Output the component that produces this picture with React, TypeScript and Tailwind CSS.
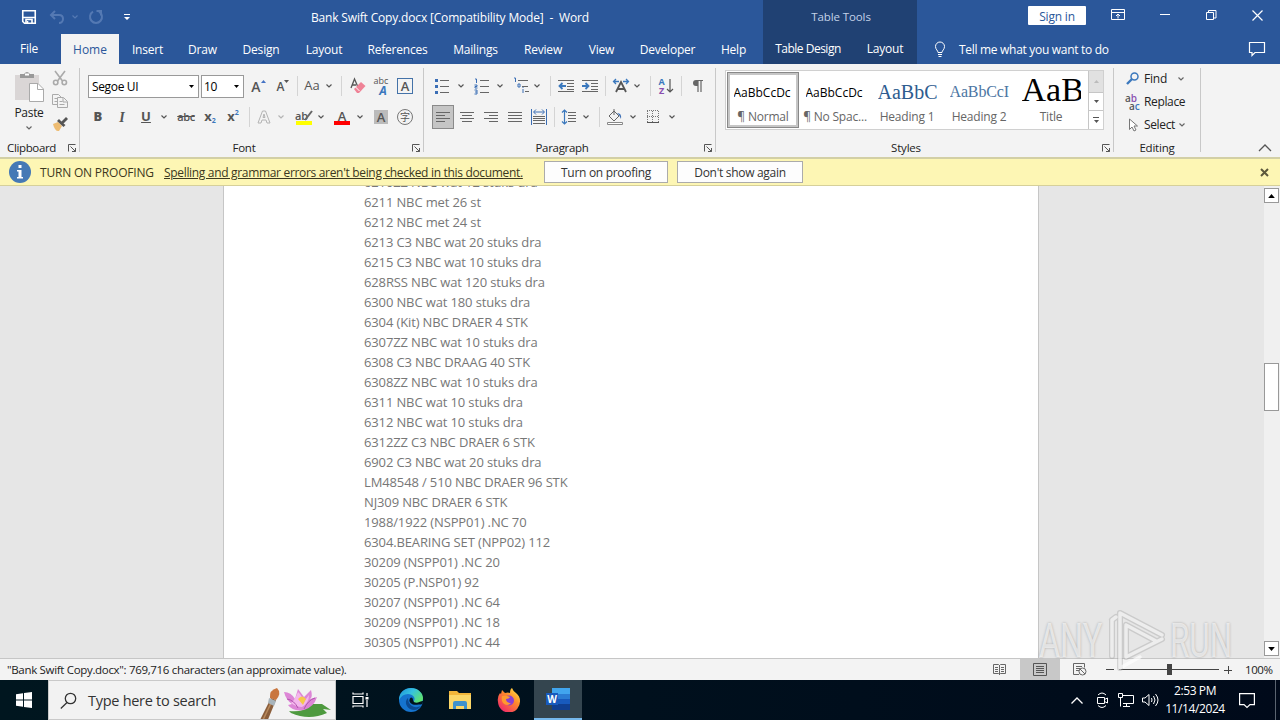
import React from 'react';
import clsx from 'clsx';

const documentLines = [
  '6210ZZ NBC wat 12 stuks dra',
  '6211 NBC met 26 st',
  '6212 NBC met 24 st',
  '6213 C3 NBC wat 20 stuks dra',
  '6215 C3 NBC wat 10 stuks dra',
  '628RSS NBC wat 120 stuks dra',
  '6300 NBC wat 180 stuks dra',
  '6304 (Kit) NBC DRAER 4 STK',
  '6307ZZ NBC wat 10 stuks dra',
  '6308 C3 NBC DRAAG 40 STK',
  '6308ZZ NBC wat 10 stuks dra',
  '6311 NBC wat 10 stuks dra',
  '6312 NBC wat 10 stuks dra',
  '6312ZZ C3 NBC DRAER 6 STK',
  '6902 C3 NBC wat 20 stuks dra',
  'LM48548 / 510 NBC DRAER 96 STK',
  'NJ309 NBC DRAER 6 STK',
  '1988/1922 (NSPP01) .NC 70',
  '6304.BEARING SET (NPP02) 112',
  '30209 (NSPP01) .NC 20',
  '30205 (P.NSP01) 92',
  '30207 (NSPP01) .NC 64',
  '30209 (NSPP01) .NC 18',
  '30305 (NSPP01) .NC 44',
];

const tabs = [
  { name: 'Insert', width: 'w-[57px]' },
  { name: 'Draw', width: 'w-[53px]' },
  { name: 'Design', width: 'w-[64px]' },
  { name: 'Layout', width: 'w-[62px]' },
  { name: 'References', width: 'w-[85px]' },
  { name: 'Mailings', width: 'w-[71px]' },
  { name: 'Review', width: 'w-[64px]' },
  { name: 'View', width: 'w-[53px]' },
  { name: 'Developer', width: 'w-[79px]' },
  { name: 'Help', width: 'w-[53px]' },
];

type CellProps = { className?: string; children?: React.ReactNode };

const Cell = ({ className, children }: CellProps) => (
  <div className={clsx('flex h-6 shrink-0 items-center justify-center', className)}>{children}</div>
);

const Sep = ({ className }: CellProps) => <div className={clsx('h-5 w-px shrink-0 bg-[#d4d4d4]', className)} />;

const Chevron = ({ className }: CellProps) => (
  <svg className={clsx('h-1 w-1.5 shrink-0', className)} viewBox="0 0 6 4" fill="none" stroke="currentColor" strokeWidth="1.2">
    <path d="M.5.5 3 3 5.5.5" />
  </svg>
);

const Triangle = ({ className }: CellProps) => (
  <svg className={clsx('shrink-0', className ?? 'h-[3px] w-[5px]')} viewBox="0 0 5 3" fill="currentColor">
    <path d="M0 0h5L2.5 3z" />
  </svg>
);

const Launcher = ({ className }: CellProps) => (
  <svg className={clsx('h-2 w-2 shrink-0', className)} viewBox="0 0 8 8" fill="none" stroke="#555">
    <path d="M.5 7.500V.5H7.500M2.500 2.500l5 5M7.500 4v3.500H4" />
  </svg>
);

// Horizontal rules used by all list and alignment icons
const Lines = ({ rows }: { rows: [number, number, number][] }) => (
  <>
    {rows.map(([x1, x2, y], i) => (
      <path key={i} d={`M${x1} ${y}.5H${x2}`} stroke="#666" />
    ))}
  </>
);

const Svg = ({ children, className }: CellProps) => (
  <svg className={clsx('h-5 w-5 shrink-0', className)} viewBox="0 0 20 20" fill="none">
    {children}
  </svg>
);

const TitleBar = () => (
  <header className="flex h-16 bg-[#2b579a] text-white">
    <div className="flex w-[763px] flex-col">
      <div className="flex h-[34px] items-center pl-[21px]">
        <svg className="h-4 w-4" viewBox="0 0 16 16" fill="none" stroke="#fff" strokeWidth="1.600">
          <path d="M1.750 1.750h12.500v12.500H3.500L1.750 12.500z" />
          <path d="M2 8.500h12M5 14v-3.500h6V14" />
          <path d="M6.500 12v2" />
        </svg>
        <svg className="ml-3 h-4 w-4 text-[#5479b3]" viewBox="0 0 16 16" fill="none" stroke="currentColor" strokeWidth="2">
          <path d="M6 2 2 6l4 4M2.500 6H10c3 0 4 2 4 4s-1.500 4-4 4" />
        </svg>
        <Chevron className="ml-[7px] text-[#5479b3]" />
        <svg className="ml-[10px] h-4 w-4 text-[#5479b3]" viewBox="0 0 16 16" fill="none" stroke="currentColor" strokeWidth="2">
          <path d="M5 2.700A6 6 0 1 0 11 2.700M8.500 2H13v4.500" />
        </svg>
        <svg className="ml-[19px] h-2 w-2" viewBox="0 0 8 8" fill="#fff">
          <path d="M1 1h6v1H1zM1 4h6L4 7z" />
        </svg>
        <div className="ml-[180px] pt-0.5 text-[12px] tracking-[-0.17px] whitespace-pre">Bank Swift Copy.docx [Compatibility Mode]  -  Word</div>
      </div>
      <nav className="flex h-[30px] text-[12px] leading-[32px] tracking-[-0.2px]">
        <div className="w-[58px] text-center leading-[30px]">File</div>
        <div className="ml-[3px] w-[58px] bg-[#f3f3f3] text-center tracking-normal text-[#2b579a]">Home</div>
        {tabs.map((tab) => (
          <div key={tab.name} className={clsx('text-center', tab.width)}>
            {tab.name}
          </div>
        ))}
      </nav>
    </div>
    <div className="flex w-[154px] flex-col bg-[#204173] text-[12px]">
      <div className="h-[34px] pl-0.5 text-center text-[11.500px] leading-[33px] tracking-[-0.1px] text-[#c3d2e8]">Table Tools</div>
      <div className="flex leading-[32px]">
        <div className="w-[90px] text-center tracking-[-0.5px]">Table Design</div>
        <div className="w-[64px] text-center tracking-[-0.2px]">Layout</div>
      </div>
    </div>
    <div className="flex w-[363px] flex-col text-[12px]">
      <div className="flex h-[34px] items-start">
        <div className="mt-1.5 ml-[111px] h-[19px] w-[58px] rounded-[1px] bg-white text-center leading-[22px] tracking-[-0.2px] text-[#2b579a]">Sign in</div>
        <svg className="mt-[7px] ml-6 h-4 w-4" viewBox="0 0 16 16" fill="none" stroke="#fff">
          <path d="M1.500 2.500h13v10h-13zM1.500 5.500h13M8 11.500v-4M6 9l2-2 2 2" />
        </svg>
        <div className="mt-[14px] ml-[34px] h-px w-[10px] bg-white" />
        <svg className="mt-[10px] ml-9 h-[11px] w-[11px]" viewBox="0 0 11 11" fill="none" stroke="#fff">
          <path d="M.5 2.500h7v7h-7zM2.500 2.500v-2h7.500v7.500H8" />
        </svg>
        <svg className="mt-[10px] ml-[35px] h-[11px] w-[11px]" viewBox="0 0 11 11" fill="none" stroke="#fff" strokeWidth="1.200">
          <path d="m.5.5 10 10M10.500.5l-10 10" />
        </svg>
      </div>
      <div className="flex h-[30px] items-center">
        <svg className="ml-4 h-4 w-3.5" viewBox="0 0 12 16" fill="none" stroke="#fff">
          <path d="M4 11.500c0-2-2.500-3-2.500-6a4.500 4.500 0 0 1 9 0c0 3-2.500 4-2.500 6zM4 13.500h4M4.500 15.500h3" />
        </svg>
        <div className="ml-3 w-[150px] pt-px tracking-[-0.3px] whitespace-nowrap">Tell me what you want to do</div>
        <svg className="ml-[139px] h-4 w-[18px]" viewBox="0 0 18 16" fill="none" stroke="#fff" strokeWidth="1.200">
          <path d="M1.500 1.500h15v10H7l-3 3v-3H1.500z" />
        </svg>
      </div>
    </div>
  </header>
);

const ClipboardGroup = () => (
  <section className="flex h-[84px] w-[80px] flex-col border-r border-[#c8c8c8]">
    <div className="flex h-[72px] shrink-0">
      <div className="flex w-[48px] flex-col items-center pl-[10px]">
        <svg className="mt-[3px] h-8 w-8 shrink-0" viewBox="0 0 32 32">
          <path d="M2 4h24v25H2z" fill="#dad6d6" />
          <path d="M7 3h4q3-4 6 0h4v4H7z" fill="#999" />
          <path d="M12 2.500h4v2h-4z" fill="#fff" />
          <path d="M16.500 12.500H25l5.500 5.500v12.500h-14z" fill="#fff" stroke="#aaa" />
          <path d="M24.500 12.500v6h6" fill="none" stroke="#aaa" />
        </svg>
        <div className="text-[12px] leading-[20px] tracking-[-0.3px]">Paste</div>
        <Chevron className="mt-[3px] text-[#666]" />
      </div>
      <div className="flex w-7 flex-col items-center pr-1">
        <svg className="mt-[2px] h-4 w-4 shrink-0" viewBox="0 0 16 16" fill="none" stroke="#aaa" strokeWidth="1.600">
          <path d="M3 1l7.500 10M13 1 5.500 11" />
          <circle cx="3.700" cy="12.500" r="2.200" />
          <circle cx="12.300" cy="12.500" r="2.200" />
        </svg>
        <svg className="mt-[7px] h-4 w-4 shrink-0" viewBox="0 0 16 16" fill="#f3f3f3" stroke="#aaa">
          <path d="M.5 1.500h6l3 3v7h-9zM2.500 5.500h4M2.500 8.500h4" />
          <path d="M5.500 4.500h6l4 4v6h-10zM11 5v4h4M7.500 8.500h3M7.500 11.500h5" />
        </svg>
        <svg className="mt-[7px] h-4 w-4 shrink-0" viewBox="0 0 16 16">
          <path d="m1 8 5-2 4 4-3 5q-4 1-6-7z" fill="#eebc72" />
          <path d="m5 5 2-2 2.500 2.500L14 1l2 2-4.500 4.500L13.500 9l-2 2z" fill="#555" />
        </svg>
      </div>
    </div>
    <div className="flex h-4 shrink-0 items-center pl-[7px] text-[11.500px]">
      <div className="w-[61px] tracking-[-0.35px]">Clipboard</div>
      <Launcher />
    </div>
  </section>
);

const FontGroup = () => (
  <section className="flex h-[84px] w-[344px] flex-col border-r border-[#c8c8c8] text-[#555]">
    <div className="mt-[6px] flex h-6 shrink-0 items-center pl-2">
      <div className="flex h-[23px] w-[111px] items-center justify-between border border-[#999] bg-white pt-px pr-1 pl-[3px] text-[12px] tracking-[-0.35px] text-black">
        Segoe UI
        <Triangle />
      </div>
      <div className="ml-[2px] flex h-[23px] w-[43px] items-center justify-between border border-[#999] bg-white pt-px pr-1 pl-[2px] text-[12px] tracking-[-0.35px] text-black">
        10
        <Triangle />
      </div>
      <Cell className="w-[29px]">
        <span className="text-[14px] font-semibold">A</span>
        <svg className="mb-2.5 h-[3px] w-[5px]" viewBox="0 0 5 3" fill="#4472c4"><path d="M0 3h5L2.500 0z" /></svg>
      </Cell>
      <Cell className="w-[20px]">
        <span className="pt-0.5 text-[12px] font-semibold">A</span>
        <Triangle className="mb-2.5 h-[3px] w-[5px]" />
      </Cell>
      <Sep className="ml-1" />
      <Cell className="w-7 text-[13px] font-medium">Aa</Cell>
      <Chevron />
      <Sep className="ml-[9px]" />
      <Cell className="w-8">
        <Svg>
          <path d="M3 12 6.500 3l3 7M4 9h4" stroke="#555" strokeWidth="1.300" />
          <path d="m6 13 7-7 4.500 4-6.500 7H9z" fill="#ef8296" />
          <path d="m7.500 11 4 4" stroke="#fff" />
        </Svg>
      </Cell>
      <Cell className="w-[14px] flex-col">
        <span className="h-[7px] text-[9px] leading-[6px] font-medium">abc</span>
        <span className="h-[10px] pl-1 text-[12px] leading-[11px] font-bold text-[#3b78bd] italic">A</span>
      </Cell>
      <Cell className="w-[34px]">
        <div className="h-4 w-4 border border-[#4472a8] text-center text-[13px] leading-[14px] font-semibold">A</div>
      </Cell>
    </div>
    <div className="mt-[7px] flex h-6 shrink-0 items-center pl-[6px]">
      <Cell className="w-6 text-[13px] font-extrabold">B</Cell>
      <Cell className="w-6 font-['Liberation_Serif'] text-[14px] font-bold italic">I</Cell>
      <Cell className="w-6 text-[13px] font-bold underline">U</Cell>
      <Cell className="w-3"><Chevron /></Cell>
      <Cell className="w-8 text-[11px] font-semibold tracking-[-0.4px] line-through">abc</Cell>
      <Cell className="w-4 text-[13px] font-bold">x<span className="pt-2 text-[7px] text-[#3b78bd]">2</span></Cell>
      <Cell className="w-[30px] text-[13px] font-bold">x<span className="pb-2 text-[7px] text-[#3b78bd]">2</span></Cell>
      <Sep className="ml-px" />
      <Cell className="w-7">
        <Svg>
          <path d="M4 16 8.500 4h3L16 16h-3l-1-3H8l-1 3zM9 10.500h2L10 7z" stroke="#b4b4b4" />
        </Svg>
      </Cell>
      <Chevron className="text-[#b4b4b4]" />
      <Cell className="ml-1.5 w-7 flex-col">
        <div className="flex h-[11px] items-end text-[11px] leading-[10px] font-semibold">
          ab
          <svg className="-ml-1 h-[11px] w-[9px]" viewBox="0 0 9 11" fill="none" stroke="#666" strokeWidth="2"><path d="M8 1 1 10" /></svg>
        </div>
        <div className="h-1 w-4 bg-[#ffff00]" />
      </Cell>
      <Chevron />
      <Cell className="ml-[3px] w-[30px] flex-col">
        <span className="h-[11px] text-[13px] leading-[12px] font-semibold">A</span>
        <div className="h-1 w-4 bg-[#f00]" />
      </Cell>
      <Chevron />
      <Cell className="ml-[11px] w-[14px]">
        <div className="h-[14px] w-[14px] bg-[#bbb] text-center text-[13px] leading-[14px] font-semibold">A</div>
      </Cell>
      <Cell className="w-[34px]">
        <div className="h-4 w-4 rounded-full border border-[#777] text-center font-['Noto_Sans_CJK_SC',sans-serif] text-[10px] leading-[14px]">字</div>
      </Cell>
    </div>
    <div className="mt-[11px] flex h-4 shrink-0 items-center text-[11.500px] tracking-[-0.2px] text-[#222]">
      <div className="w-[332px] pr-1 text-center">Font</div>
      <Launcher />
    </div>
  </section>
);

const ParagraphGroup = () => (
  <section className="flex h-[84px] w-[292px] flex-col border-r border-[#c8c8c8] text-[#555]">
    <div className="mt-[6px] flex h-6 shrink-0 items-center pl-2">
      <Svg>
        <path d="M3 3h3v3H3zM3 9h3v3H3zM3 15h3v3H3z" fill="#3b6eb5" />
        <Lines rows={[[8, 17, 4], [8, 17, 10], [8, 17, 16]]} />
      </Svg>
      <Chevron className="ml-1.5" />
      <Svg className="ml-2">
        <path d="M3 3h1.500v4M2.500 9h2.500v1.500H3V12h2.500M2.500 14h2.500v4H2.500M3 16h2" stroke="#3b6eb5" />
        <Lines rows={[[8, 17, 4], [8, 17, 10], [8, 17, 16]]} />
      </Svg>
      <Chevron className="ml-[5px]" />
      <Svg className="ml-2">
        <path d="M3 2h1.500v4M7 8h2v3H7zM12 13v4M12 11v1" stroke="#3b6eb5" />
        <Lines rows={[[7, 17, 4], [11, 17, 10], [14, 18, 15]]} />
      </Svg>
      <Chevron className="ml-[3px]" />
      <Sep className="ml-[10px]" />
      <Svg className="ml-[5px]">
        <Lines rows={[[2, 18, 4], [11, 18, 7], [11, 18, 10], [11, 18, 13], [2, 18, 15]]} />
        <path d="M10 10H4M6.500 7l-3 3 3 3" stroke="#3b78bd" strokeWidth="1.800" />
      </Svg>
      <Svg className="ml-1">
        <Lines rows={[[2, 18, 4], [11, 18, 7], [11, 18, 10], [11, 18, 13], [2, 18, 15]]} />
        <path d="M2 10h6M5.500 7l3 3-3 3" stroke="#3b78bd" strokeWidth="1.800" />
      </Svg>
      <Sep className="ml-[5px]" />
      <Svg className="ml-[5px]">
        <path d="m5 16 5-10 5 10M7 13h6" stroke="#555" strokeWidth="1.800" />
        <path d="M2.500 5.500H8M5 3 2.500 5.500 5 8M17.500 5.500H12M15 3l2.500 2.500L15 8" stroke="#3b78bd" strokeWidth="1.300" />
      </Svg>
      <Chevron className="ml-[3px]" />
      <Sep className="ml-[10px]" />
      <div className="ml-[6px] flex h-5 w-5 items-center">
        <div className="flex w-[9px] flex-col text-center text-[9px] leading-[9px] font-bold">
          <span className="text-[#3b78bd]">A</span>
          <span className="text-[#8a4fb0]">Z</span>
        </div>
        <svg className="h-4 w-2" viewBox="0 0 8 16" fill="none" stroke="#555" strokeWidth="1.200"><path d="M4 1v13M1 11l3 3 3-3" /></svg>
      </div>
      <Sep className="ml-1" />
      <Svg className="ml-[5px]">
        <path d="M9 4.500h7M11 4v12M14 4v12" stroke="#666" strokeWidth="1.200" />
        <path d="M11 4H9a3 3 0 0 0 0 6h2z" fill="#666" />
      </Svg>
    </div>
    <div className="mt-[7px] flex h-6 shrink-0 items-center pl-2">
      <div className="flex h-6 w-[22px] items-center justify-center border border-[#8a8a8a] bg-[#c5c5c5]">
        <Svg><Lines rows={[[3, 17, 5], [3, 12, 8], [3, 17, 11], [3, 12, 14]]} /></Svg>
      </div>
      <Svg className="ml-[3px]"><Lines rows={[[3, 17, 5], [5, 15, 8], [3, 17, 11], [5, 15, 14]]} /></Svg>
      <Svg className="ml-1"><Lines rows={[[3, 17, 5], [8, 17, 8], [3, 17, 11], [8, 17, 14]]} /></Svg>
      <Svg className="ml-1"><Lines rows={[[3, 17, 5], [3, 17, 8], [3, 17, 11], [3, 17, 14]]} /></Svg>
      <Svg className="ml-1">
        <path d="M2.500 2v16M17.500 2v16M5 5h10M7 2.500 4.500 5 7 7.500M13 2.500 15.500 5 13 7.500" stroke="#3b6eb5" />
        <Lines rows={[[4, 16, 9], [4, 16, 11], [4, 16, 13], [4, 16, 16]]} />
      </Svg>
      <Sep className="ml-[5px]" />
      <Svg className="ml-1">
        <path d="M5.500 3v14M3 5.500 5.500 3 8 5.500M3 14.500 5.500 17 8 14.500" stroke="#3b78bd" strokeWidth="1.200" />
        <Lines rows={[[9, 17, 5], [9, 17, 8], [9, 17, 11], [9, 17, 14]]} />
      </Svg>
      <Chevron className="ml-1" />
      <Sep className="ml-[10px]" />
      <Svg className="ml-[5px]">
        <path d="m9 4 5 5-5 5-5-5zM9 8V2" stroke="#666" />
        <path d="M12 6q5 0 4 6l-2-4z" fill="#3b6eb5" />
        <path d="M2.500 15.500h15v2h-15z" fill="#fff" stroke="#888" />
      </Svg>
      <Chevron className="ml-[5px]" />
      <Svg className="ml-[7px]">
        <path d="M4 3.500h12M4 9.500h12M4.500 4v11M9.500 4v11M15.500 4v11" stroke="#777" strokeDasharray="1 1" />
        <path d="M4 15.500h12" stroke="#555" />
      </Svg>
      <Chevron className="ml-1.5" />
    </div>
    <div className="mt-[11px] flex h-4 shrink-0 items-center text-[11.500px] tracking-[-0.3px] text-[#222]">
      <div className="w-[280px] pr-1 text-center">Paragraph</div>
      <Launcher />
    </div>
  </section>
);

const StyleCard = ({ sample, name, className, selected }: { sample: string; name: string; className: string; selected?: boolean }) => (
  <div className={clsx('flex h-[56px] w-[72px] flex-col', selected && 'border border-[#888] shadow-[inset_0_0_0_2px_#c6c6c6]')}>
    <div className={clsx('mx-auto flex w-[59px] shrink-0 items-center overflow-hidden whitespace-nowrap', className)}>{sample}</div>
    <div className="text-center text-[12px] leading-[16px] tracking-[-0.2px] text-[#666]">{name}</div>
  </div>
);

const StylesGroup = () => (
  <section className="flex h-[84px] w-[398px] flex-col border-r border-[#c8c8c8]">
    <div className="mt-[2px] ml-[9px] flex h-[60px] w-[379px] shrink-0 border border-[#d0d0d0] bg-white pt-px pl-px">
      <StyleCard sample="AaBbCcDc" name="¶ Normal" className="h-9 pt-1 text-[12px] text-black" selected />
      <StyleCard sample="AaBbCcDc" name="¶ No Spac..." className="h-[37px] pt-[5px] text-[12px] text-black" />
      <StyleCard sample="AaBbC" name="Heading 1" className="h-[37px] pt-[3px] font-['Liberation_Serif'] text-[20px] text-[#2e5c8f]" />
      <StyleCard sample="AaBbCcI" name="Heading 2" className="h-[37px] pt-[3px] font-['Liberation_Serif'] text-[16px] tracking-[-0.15px] text-[#4c76a3]" />
      <StyleCard sample="AaB" name="Title" className="mt-1.5 h-[31px] pb-[9px] font-['Liberation_Serif'] text-[34px] text-black" />
      <div className="-mt-px ml-px flex w-[15px] flex-col border-l border-[#c6c6c6] text-[#555]">
        <div className="flex h-[21px] items-center justify-center bg-[#e1e1e1] text-[#bbb]"><Triangle className="h-[3px] w-[5px] rotate-180" /></div>
        <div className="flex h-[19px] items-center justify-center border-y border-[#c6c6c6]"><Triangle /></div>
        <div className="flex flex-1 flex-col items-center justify-center gap-0.5">
          <div className="h-px w-1.5 bg-[#555]" />
          <Triangle />
        </div>
      </div>
    </div>
    <div className="mt-[10px] flex h-4 shrink-0 items-center text-[11.500px] tracking-[-0.2px]">
      <div className="w-[386px] pr-1.5 text-center">Styles</div>
      <Launcher />
    </div>
  </section>
);

const EditingGroup = () => (
  <section className="flex h-[84px] w-[87px] flex-col border-r border-[#c8c8c8] text-[12px] tracking-[-0.2px]">
    <div className="flex h-[21px] shrink-0 items-center pl-3">
      <svg className="h-[13px] w-[13px]" viewBox="0 0 13 13" fill="none" stroke="#3b78bd" strokeWidth="1.500">
        <circle cx="8.500" cy="4.500" r="3.500" />
        <path d="M6 7 1 12" strokeWidth="2.400" />
      </svg>
      <span className="ml-[5px] w-[34px]">Find</span>
      <Chevron className="text-[#666]" />
    </div>
    <div className="flex h-[25px] shrink-0 items-center pl-[11px]">
      <div className="flex w-4 flex-col text-[10px] leading-[8px] font-semibold tracking-normal">
        <span className="text-[#555]">a<span className="text-[#8a4fb0]">b</span></span>
        <span className="pl-1 text-[#555]">a<span className="text-[#3b78bd]">c</span></span>
      </div>
      <span className="ml-[3px] tracking-[-0.35px]">Replace</span>
    </div>
    <div className="flex h-[22px] shrink-0 items-center pl-[14px]">
      <svg className="h-[14px] w-[11px]" viewBox="0 0 11 14" fill="#fff" stroke="#777">
        <path d="M1.500 1v10.500L4 9l2 4 2-1-2-4h3.500z" />
      </svg>
      <span className="ml-[5px] w-[35px] tracking-[-0.35px]">Select</span>
      <Chevron className="text-[#666]" />
    </div>
    <div className="mt-1 h-4 shrink-0 text-center text-[11.500px] leading-[16px]">Editing</div>
  </section>
);

const Ribbon = () => (
  <div className="flex h-[93px] bg-[#f3f3f3] pt-1 text-[#222]">
    <ClipboardGroup />
    <FontGroup />
    <ParagraphGroup />
    <StylesGroup />
    <EditingGroup />
    <svg className="mt-[76px] ml-[57px] h-[8px] w-[14px]" viewBox="0 0 14 8" fill="none" stroke="#555" strokeWidth="1.300">
      <path d="m1 7 6-6 6 6" />
    </svg>
  </div>
);

const ProofingBar = () => (
  <div className="flex h-[29px] items-center border-t-2 border-b border-t-[#d2cfa5] border-b-[#d6d09a] bg-[#fdf6b4] text-[12px] text-[#3c3820]">
    <div className="ml-[9px] flex h-[22px] w-[22px] items-center justify-center rounded-full bg-[#4579b5]">
      <svg className="h-[14px] w-2" viewBox="0 0 8 14" fill="#fff">
        <path d="M2.500 0h3v3h-3zM1 5h4.500v7H7v1.500H1V12h1.500V6.500H1z" />
      </svg>
    </div>
    <div className="ml-[9px] w-[124px] pt-px tracking-[-0.2px] whitespace-nowrap">TURN ON PROOFING</div>
    <div className="w-[380px] pt-px tracking-[-0.32px] whitespace-nowrap underline">Spelling and grammar errors aren't being checked in this document.</div>
    <div className="h-[22px] w-[124px] border border-[#ababab] bg-[#fdfdfd] text-center leading-[21px] tracking-[-0.3px] text-[#333]">Turn on proofing</div>
    <div className="ml-[9px] h-[22px] w-[126px] border border-[#ababab] bg-[#fdfdfd] text-center leading-[21px] tracking-[-0.3px] text-[#333]">Don't show again</div>
    <svg className="ml-[457px] h-[9px] w-[9px]" viewBox="0 0 9 9" fill="none" stroke="#5c583c" strokeWidth="2">
      <path d="m1 1 7 7M8 1 1 8" />
    </svg>
  </div>
);

const DocumentArea = () => (
  <main className="flex h-[472px] overflow-hidden bg-[#e6e6e6]">
    <div className="ml-[223px] w-[816px] border-x border-[#c6c6c6] bg-white pl-[140px]">
      <div className="-mt-[14px] text-[13px] leading-[20px] tracking-[-0.13px] whitespace-nowrap text-[#777]">
        {documentLines.map((line, index) => (
          <div key={index}>{line}</div>
        ))}
      </div>
    </div>
    <div className="ml-auto flex w-4 flex-col justify-between bg-[#f0f0f0] pt-[2px] pb-[2px]">
      <div className="flex h-[15px] w-[15px] items-center justify-center border border-[#999] bg-white"><Triangle className="h-1 w-[7px] rotate-180" /></div>
      <div className="mt-[130px] h-12 w-[15px] border border-[#999] bg-white" />
      <div className="mt-[200px] flex h-[15px] w-[15px] items-center justify-center border border-[#999] bg-white"><Triangle className="h-1 w-[7px]" /></div>
    </div>
  </main>
);

const StatusBar = () => (
  <div className="flex h-[22px] items-center border-t border-[#c6c6c6] bg-[#f3f3f3] text-[11.500px] text-[#222]">
    <div className="w-[985px] pl-[7px] tracking-[-0.32px]">"Bank Swift Copy.docx": 769,716 characters (an approximate value).</div>
    <div className="flex w-[35px] justify-start pl-2">
      <svg className="h-[13px] w-[13px]" viewBox="0 0 13 13" fill="none" stroke="#666">
        <path d="M.5 1.500h5l1 1 1-1h5v9h-5l-1 1-1-1h-5zM6.500 2v10M2 4.500h3M2 6.500h3M2 8.500h3M8 4.500h3M8 6.500h3M8 8.500h3" />
      </svg>
    </div>
    <div className="flex h-full w-10 items-center justify-center bg-[#c8c8c8]">
      <svg className="h-[13px] w-[14px]" viewBox="0 0 14 13" fill="none" stroke="#555">
        <path d="M.5.5h13v12H.5zM3 3.500h8M3 5.500h8M3 7.500h8M3 9.500h8" />
      </svg>
    </div>
    <svg className="ml-[13px] h-[13px] w-[14px]" viewBox="0 0 14 13" fill="none" stroke="#666">
      <path d="M6 11.500H.5V.5h11v4M3 3.500h6M3 5.500h4M3 7.500h3" />
      <circle cx="9.500" cy="8.500" r="3.500" />
      <path d="m7 6 5 5" />
    </svg>
    <div className="ml-[19px] h-px w-2 bg-[#444]" />
    <div className="ml-[5px] flex w-[100px] items-center justify-center">
      <div className="h-px flex-1 bg-[#444]" />
      <div className="h-[11px] w-[5px] bg-[#444]" />
      <div className="h-px flex-1 bg-[#444]" />
    </div>
    <svg className="ml-[5px] h-2 w-2" viewBox="0 0 8 8" stroke="#444"><path d="M0 4.500h8M4.500 0v8" /></svg>
    <div className="ml-[13px] tracking-[-0.4px]">100%</div>
  </div>
);

const LotusArt = () => (
  <svg className="h-[38px] w-[76px]" viewBox="0 0 76 38">
    <path d="M0 38 12 14l5 2L8 38z" fill="#8b5e3b" />
    <path d="M3 38 13 17" stroke="#b98a5c" strokeWidth="1.500" />
    <path d="M11 14q-1-8 7-10 5 5-1 12z" fill="#c9763f" />
    <path d="m10 14 7 3-2 5-6-3z" fill="#a8b4bb" />
    <path d="M30 27q14 2 22-7h11l9 6-8-1 4 4q-18 8-36 0z" fill="#4e9a3f" />
    <path d="M25 8q7 0 11 7l3-10 6 8 7-7q2 7-1 9l7-2q-3 10-13 13-11 2-16-5l4-1q-6-4-8-12z" fill="#dd86d6" />
    <path d="M32 19q4-3 7-11 5 4 5 11l6-8q0 8-7 12-6 0-11-4z" fill="#f4b6ec" />
    <path d="M39 15q4-5 8 0l-3 6z" fill="#f5c84b" />
    <path d="M28 15q7 1 11 9M56 14q-7 2-11 11" stroke="#b053ae" fill="none" />
  </svg>
);

const Taskbar = () => (
  <footer className="flex h-10 items-center bg-gradient-to-r from-[#00161f] via-[#00101d] to-[#000a1a] text-white">
    <div className="flex w-12 justify-center">
      <svg className="h-4 w-4" viewBox="0 0 16 16" fill="#fff">
        <path d="M0 2.300 7 1.300v6.200H0zM8 1.100 16 0v7.500H8zM0 8.500h7v6.200l-7-1zM8 8.500h8V16l-8-1.100z" />
      </svg>
    </div>
    <div className="flex h-10 w-[288px] items-center overflow-hidden border border-[#c9c9c9] bg-[#f2f2f2] text-[#333]">
      <svg className="ml-[11px] h-[17px] w-[17px]" viewBox="0 0 17 17" fill="none" stroke="#333" strokeWidth="1.300">
        <circle cx="10.500" cy="6.500" r="5.200" />
        <path d="M7 10.500.8 16.500" />
      </svg>
      <div className="ml-[11px] pt-0.5 text-[14.500px] tracking-[-0.28px]">Type here to search</div>
      <div className="ml-auto h-[32px]"><LotusArt /></div>
    </div>
    <div className="flex w-12 justify-center">
      <svg className="h-4 w-[17px]" viewBox="0 0 17 16" fill="none" stroke="#fff" strokeWidth="1.200">
        <path d="M1 4.500h10v7H1zM1 .5V2h10V.5M1 15.500V14h10v1.500M15 1v3M15 8v7" />
        <path d="M13.500 5h3v2.500h-3z" fill="#fff" stroke="none" />
      </svg>
    </div>
    <div className="flex w-[54px] justify-center">
      <svg className="h-6 w-6" viewBox="0 0 24 24">
        <defs>
          <linearGradient id="edgeTop" x1="0" y1="0" x2="1" y2="0.600">
            <stop offset="0" stopColor="#1b8fd8" />
            <stop offset="0.500" stopColor="#35c1e0" />
            <stop offset="1" stopColor="#5fe36e" />
          </linearGradient>
        </defs>
        <circle cx="12" cy="12" r="12" fill="#1574cf" />
        <path d="M0 12C0 4 6 0 12 0c7 0 12 5 12 10 0 4-3 6-6 6-4 0-4-2-3-3 2-3-1-7-6-7-4 0-7 2-9 6z" fill="url(#edgeTop)" />
        <path d="M9 10c-3 2-3 8 2 11 4 2 8 1 11-3-6 3-13 0-13-8z" fill="#0b4a92" />
        <path d="M12 9.500a3.500 3.500 0 0 0-.5 5.500c2 2 5 2 8 1.500 3-.4 4 1 4.500-3 .6-2-5 2-8 1-3-1-1-5-4-5z" fill="#00121d" />
      </svg>
    </div>
    <div className="flex w-[43px] justify-center">
      <svg className="h-5 w-[22px]" viewBox="0 0 22 20">
        <path d="M0 1h8l2 2h12v16H0z" fill="#f2b63a" />
        <path d="M0 5h22v14H0z" fill="#fbd768" />
        <path d="M4 19v-6q0-2 2-2h10q2 0 2 2v6h-3v-3H7v3z" fill="#3e92cc" />
      </svg>
    </div>
    <div className="flex w-[53px] justify-center pl-0.5">
      <svg className="h-6 w-6" viewBox="0 0 24 24">
        <defs>
          <linearGradient id="fox" x1="1" y1="0" x2="0.200" y2="1">
            <stop offset="0" stopColor="#fff04a" />
            <stop offset="0.450" stopColor="#ff8a2a" />
            <stop offset="1" stopColor="#f0246e" />
          </linearGradient>
        </defs>
        <path d="M3 5l1 1 1-4 3 3q3-1 5 0 0-4 2-5 1 3 4 5 4 3 4 8A11 11 0 0 1 1 14Q0 9 3 5z" fill="url(#fox)" />
        <circle cx="12" cy="12.500" r="5" fill="#8a3fd1" />
        <path d="M5 8q4-1 8 1-1 2-4 2 0 4 5 4-4 4-8 0-2-3-1-7z" fill="#ff9a2e" />
      </svg>
    </div>
    <div className="flex h-10 w-12 items-center justify-center border-b-2 border-[#76b9ed] bg-[#34454f]">
      <svg className="h-[22px] w-6" viewBox="0 0 24 22">
        <path d="M6 0h18v6H6z" fill="#41a5ee" />
        <path d="M6 6h18v5H6z" fill="#2b7cd3" />
        <path d="M6 11h18v5H6z" fill="#185abd" />
        <path d="M6 16h18v6H6z" fill="#103f91" />
        <path d="M0 5h12v12H0z" fill="#185abd" />
        <text x="6" y="14.500" fill="#fff" fontSize="10" fontWeight="700" textAnchor="middle">W</text>
      </svg>
    </div>
    <div className="ml-auto flex h-10 items-center">
      <svg className="h-[7px] w-3" viewBox="0 0 12 7" fill="none" stroke="#fff" strokeWidth="1.300"><path d="m.5 6.500 5.500-5.500 5.500 5.500" /></svg>
      <svg className="ml-[13px] h-4 w-3" viewBox="0 0 12 16" fill="none" stroke="#fff">
        <path d="M1.500 5.500h7v6h-7zM8.500 7.500l3-1.500v5l-3-1.500M2 3q4-4 8 0M2 13.500q4 4 8 0" />
      </svg>
      <svg className="ml-[10px] h-[15px] w-4" viewBox="0 0 16 15" fill="none" stroke="#fff">
        <path d="M5 2.500h10.500v8H5M8.500 10.500v3M5 13.500h7M.5.500h4v4h-4zM2.500 4.500v9" />
      </svg>
      <svg className="ml-2 h-[14px] w-[17px]" viewBox="0 0 17 14" fill="none" stroke="#fff">
        <path d="M.5 5H3l4-3.500v11L3 9H.5zM9.500 5q1 2 0 4M11.500 3q3 4 0 8M13.500 1q5 6 0 12" />
      </svg>
      <div className="ml-1.5 w-[60px] text-center text-[12px] leading-[18px] tracking-[-0.4px]">
        <div>2:53 PM</div>
        <div>11/14/2024</div>
      </div>
      <svg className="ml-[14px] h-[17px] w-4" viewBox="0 0 16 17" fill="none" stroke="#fff" strokeWidth="1.200">
        <path d="M.6 1.600h14.800v11H11L8 15.500l-3-2.900H.6z" />
      </svg>
      <div className="mr-1 ml-5 h-10 w-px bg-[#5a6470]" />
    </div>
  </footer>
);

const Watermark = () => (
  <div className="pointer-events-none absolute top-[608px] left-[1039px] flex h-16 w-[200px] items-center font-['Roboto',sans-serif] text-[49px] leading-none text-white/65 [text-shadow:0_0_3px_rgba(0,0,0,0.28)]">
    <div className="w-[67px]"><span className="inline-block origin-left scale-x-[0.66]">ANY</span></div>
    <svg className="h-16 w-[62px]" viewBox="0 0 62 64" fill="none" strokeLinejoin="round" strokeLinecap="round">
      <path d="M14 60V5L56 27M20 17v32L56 31M20 17l30 16M6 12v36M6 12l4-3" stroke="#999" strokeOpacity=".35" strokeWidth="6" />
      <path d="M14 60V5L56 27M20 17v32L56 31M20 17l30 16M6 12v36M6 12l4-3M14 60l20-11" stroke="#fff" strokeOpacity=".65" strokeWidth="3.500" />
    </svg>
    <div className="ml-0.5 w-[67px]"><span className="inline-block origin-left scale-x-[0.64]">RUN</span></div>
  </div>
);

const App = () => {
  return (
    <div className="relative h-[720px] w-[1280px] overflow-hidden bg-[#e6e6e6] font-['Open_Sans','Noto_Sans',sans-serif]">
      <TitleBar />
      <Ribbon />
      <ProofingBar />
      <DocumentArea />
      <StatusBar />
      <Taskbar />
      <Watermark />
    </div>
  );
};

export default App;
